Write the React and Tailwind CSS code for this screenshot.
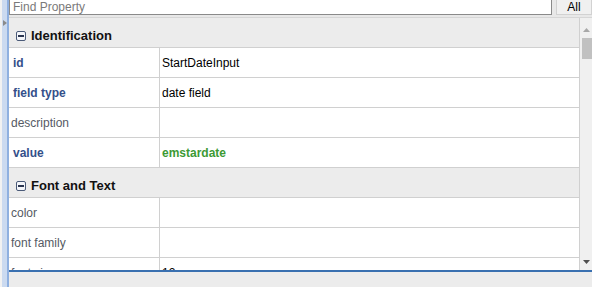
import React from 'react';

const sections = [
  {
    title: 'Identification',
    rows: [
      { label: 'id', value: 'StartDateInput', strong: true },
      { label: 'field type', value: 'date field', strong: true },
      { label: 'description', value: '' },
      { label: 'value', value: 'emstardate', strong: true, green: true },
    ],
  },
  {
    title: 'Font and Text',
    rows: [
      { label: 'color', value: '' },
      { label: 'font family', value: '' },
      { label: 'font size', value: '12' },
    ],
  },
];

function MinusBox() {
  return (
    <svg width="10" height="10" viewBox="0 0 10 10" className="shrink-0">
      <rect x="0.5" y="0.5" width="9" height="9" rx="1.5" fill="#f4f6fa" stroke="#4a5a78" />
      <rect x="2" y="4" width="6" height="2" fill="#2a3550" />
    </svg>
  );
}

function Row({ row }) {
  return (
    <div className="flex h-[30px] border-b border-[#d0d0d0] bg-white">
      <div
        className={
          row.strong
            ? 'w-[151px] shrink-0 border-r border-[#d0d0d0] pl-[4px] flex items-center font-bold text-[#34508a]'
            : 'w-[151px] shrink-0 border-r border-[#d0d0d0] pl-[2px] flex items-center text-[#555a64]'
        }
      >
        {row.label}
      </div>
      <div
        className={
          row.green
            ? 'flex-1 pl-[2px] flex items-center font-bold text-[#3c9a34]'
            : 'flex-1 pl-[2px] flex items-center text-black'
        }
      >
        {row.value}
      </div>
    </div>
  );
}

export default function App() {
  return (
    <div className="w-[592px] h-[287px] flex bg-[#ececec] overflow-hidden text-[12px] font-['Liberation_Sans',Arial,sans-serif]">
      {/* left collapse strip */}
      <div className="w-[9px] shrink-0 flex border-r-[2px] border-[#8fb0e0] bg-[#cbdaf0]">
        <div className="w-[2px] bg-[#f2f2f2]" />
        <div className="flex-1 flex flex-col pt-[20px] items-center">
          <svg width="4" height="6" viewBox="0 0 4 6">
            <path d="M0 0 L4 3 L0 6 Z" fill="#8a8a8a" />
          </svg>
        </div>
      </div>

      <div className="flex-1 flex flex-col min-w-0">
        {/* search bar */}
        <div className="h-[18px] shrink-0 flex gap-[4px] border-b border-[#d6d6d6] bg-[#e8e8e8]">
          <div className="flex-1 h-[15px] bg-white border border-t-0 border-[#8a8a8a] flex items-center pl-[3px] text-[#7a7a7a] leading-none">
            Find Property
          </div>
          <div className="w-[36px] h-[15px] bg-[#f0f0f0] border border-t-0 border-[#d2d2d2] flex items-center justify-center text-black leading-none">
            All
          </div>
        </div>

        {/* property grid */}
        <div className="flex-1 flex min-h-0">
          <div className="flex-1 overflow-hidden">
            {sections.map((s) => (
              <div key={s.title}>
                <div className="h-[30px] flex items-center gap-[5px] pl-[7px] pt-[6px] border-b border-[#d0d0d0] font-bold text-[13px] text-[#111]">
                  <MinusBox />
                  {s.title}
                </div>
                {s.rows.map((r) => (
                  <Row key={r.label} row={r} />
                ))}
              </div>
            ))}
          </div>
          {/* scrollbar */}
          <div className="w-[13px] shrink-0 bg-[#f0f0f0] border-l border-[#d0d0d0] flex flex-col items-center justify-between pt-[10px] pb-[6px]">
            <div className="flex flex-col items-center gap-[6px] w-full">
              <svg width="7" height="4" viewBox="0 0 7 4">
                <path d="M0 4 L3.5 0 L7 4 Z" fill="#a8a8a8" />
              </svg>
              <div className="w-[10px] h-[21px] bg-[#c1c1c1] ml-[1px]" />
            </div>
            <svg width="7" height="4" viewBox="0 0 7 4">
              <path d="M0 0 L3.5 4 L7 0 Z" fill="#505050" />
            </svg>
          </div>
        </div>

        {/* footer */}
        <div className="h-[17px] shrink-0 border-t-[2px] border-[#3a70b0] bg-[#ececec]" />
      </div>
    </div>
  );
}
